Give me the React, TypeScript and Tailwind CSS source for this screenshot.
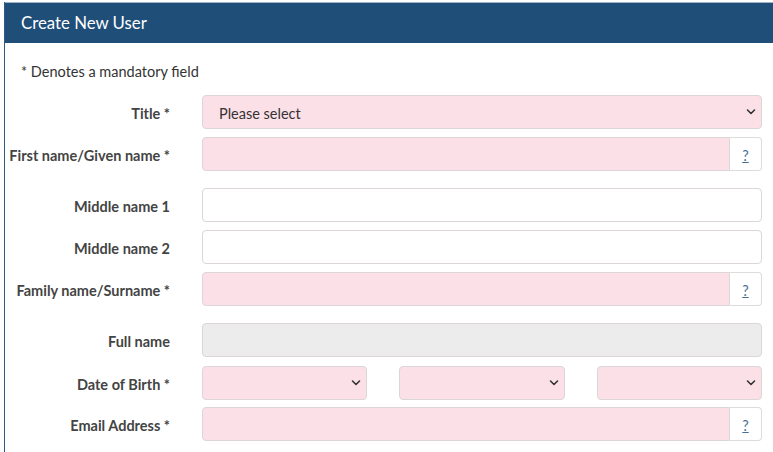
import React from 'react'

const font = { fontFamily: 'Lato, "Open Sans", sans-serif' }

function Chevron() {
  return (
    <svg width="10" height="7" viewBox="0 0 10 7" className="absolute right-[5px] top-1/2 -translate-y-1/2">
      <path d="M1.5 1.5 L5 5 L8.5 1.5" fill="none" stroke="#333" strokeWidth="1.6" strokeLinecap="round" strokeLinejoin="round" />
    </svg>
  )
}

function SelectBox({ text }: { text?: string }) {
  return (
    <div className="relative h-[34px] flex-1 rounded border border-[#dcd6d8] bg-[#fce0e8] flex items-center pl-4 pt-[3px] text-[14.5px] text-[#333]">
      {text}
      <Chevron />
    </div>
  )
}

function TextBox({ required, help, disabled }: { required?: boolean; help?: boolean; disabled?: boolean }) {
  const bg = disabled ? 'bg-[#ececec]' : required ? 'bg-[#fce0e8]' : 'bg-white'
  return (
    <div className="flex h-[34px] flex-1">
      <div className={`flex-1 border border-[#dcd6d8] ${bg} ${help ? 'rounded-l' : 'rounded'}`} />
      {help && (
        <div className="w-[32px] border border-l-0 border-[#dcdcdc] rounded-r bg-white flex items-center justify-center pt-[3px]">
          <span className="text-[14.5px] text-[#4a6f94] underline">?</span>
        </div>
      )}
    </div>
  )
}

function Row({ label, children, mb }: { label: string; children: React.ReactNode; mb: string }) {
  return (
    <div className={`flex items-center ${mb}`}>
      <label className="w-[166px] shrink-0 pr-[1px] pt-[3px] text-right text-[14.5px] font-bold text-[#444] whitespace-nowrap">
        {label}
      </label>
      <div className="flex flex-1 ml-[31px]">{children}</div>
    </div>
  )
}

export default function App() {
  return (
    <div style={font} className="w-[773px] h-[452px] overflow-hidden bg-white pl-1 pt-[2px]">
      <div className="border-l border-[#2e5b86] h-full">
        <div className="h-[41px] bg-[#1f4e79] flex items-center pl-4 border-t border-[#9fb3c8]">
          <span className="text-white text-[16.8px]">Create New User</span>
        </div>
        <div className="pr-[11px] pt-[19px]">
          <p className="pl-4 text-[14.5px] leading-[20px] h-[20px] text-[#333] mb-[13px]">* Denotes a mandatory field</p>
          <Row label="Title *" mb="mb-[8px]">
            <SelectBox text="Please select" />
          </Row>
          <Row label="First name/Given name *" mb="mb-[17px]">
            <TextBox required help />
          </Row>
          <Row label="Middle name 1" mb="mb-[8px]">
            <TextBox />
          </Row>
          <Row label="Middle name 2" mb="mb-[8px]">
            <TextBox />
          </Row>
          <Row label="Family name/Surname *" mb="mb-[17px]">
            <TextBox required help />
          </Row>
          <Row label="Full name" mb="mb-[9px]">
            <TextBox disabled />
          </Row>
          <Row label="Date of Birth *" mb="mb-[7px]">
            <div className="grid grid-cols-3 gap-[32px] flex-1">
              <SelectBox />
              <SelectBox />
              <SelectBox />
            </div>
          </Row>
          <Row label="Email Address *" mb="mb-[8px]">
            <TextBox required help />
          </Row>
        </div>
      </div>
    </div>
  )
}
